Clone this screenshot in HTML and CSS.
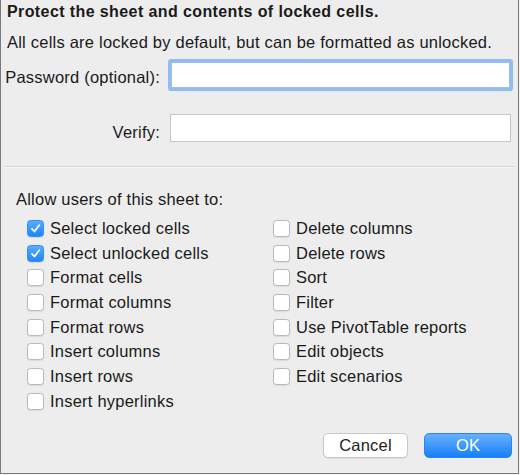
FILE: index.html
```html
<!DOCTYPE html>
<html>
<head>
<meta charset="utf-8">
<link rel="stylesheet" href="styles.css">
</head>
<body>
<div class="dialog">
  <div class="title">Protect the sheet and contents of locked cells.</div>
  <div class="desc">All cells are locked by default, but can be formatted as unlocked.</div>
  <div class="field-row pw-row">
    <label class="field-label">Password (optional):</label>
    <div class="input focused"></div>
  </div>
  <div class="field-row verify-row">
    <label class="field-label">Verify:</label>
    <div class="input"></div>
  </div>
  <div class="separator"></div>
  <div class="allow">Allow users of this sheet to:</div>
  <div class="options">
    <div class="col">
      <div class="opt"><span class="cb checked"><svg viewBox="0 0 16 16"><path d="M4.2 8.4 L6.9 11.2 L11.9 4.6" fill="none" stroke="#fff" stroke-width="1.9" stroke-linecap="round" stroke-linejoin="round"/></svg></span>Select locked cells</div>
      <div class="opt"><span class="cb checked"><svg viewBox="0 0 16 16"><path d="M4.2 8.4 L6.9 11.2 L11.9 4.6" fill="none" stroke="#fff" stroke-width="1.9" stroke-linecap="round" stroke-linejoin="round"/></svg></span>Select unlocked cells</div>
      <div class="opt"><span class="cb"></span>Format cells</div>
      <div class="opt"><span class="cb"></span>Format columns</div>
      <div class="opt"><span class="cb"></span>Format rows</div>
      <div class="opt"><span class="cb"></span>Insert columns</div>
      <div class="opt"><span class="cb"></span>Insert rows</div>
      <div class="opt"><span class="cb"></span>Insert hyperlinks</div>
    </div>
    <div class="col">
      <div class="opt"><span class="cb"></span>Delete columns</div>
      <div class="opt"><span class="cb"></span>Delete rows</div>
      <div class="opt"><span class="cb"></span>Sort</div>
      <div class="opt"><span class="cb"></span>Filter</div>
      <div class="opt"><span class="cb"></span>Use PivotTable reports</div>
      <div class="opt"><span class="cb"></span>Edit objects</div>
      <div class="opt"><span class="cb"></span>Edit scenarios</div>
    </div>
  </div>
  <div class="buttons">
    <button class="btn cancel">Cancel</button>
    <button class="btn ok">OK</button>
  </div>
</div>
</body>
</html>
```
FILE: styles.css
```css
html, body {
  margin: 0;
  padding: 0;
  background: #f4f4f4;
}
.dialog {
  width: 519px;
  height: 474px;
  box-sizing: border-box;
  background: #ededed;
  border-left: 1px solid #7a7a7a;
  border-right: 1px solid #7a7a7a;
  border-bottom: 1px solid #7a7a7a;
  font-family: "Liberation Sans", Arial, sans-serif;
  font-size: 16.5px;
  letter-spacing: 0.22px;
  color: #1a1a1a;
  display: flex;
  flex-direction: column;
}
.title {
  font-weight: bold;
  font-size: 16px;
  letter-spacing: 0.4px;
  line-height: 20px;
  padding: 2px 0 0 6px;
  height: 30px;
  box-sizing: border-box;
}
.desc {
  line-height: 20px;
  padding-left: 6px;
  margin-top: 2px;
}
.field-row {
  display: flex;
  align-items: flex-start;
}
.field-label {
  width: 159px;
  text-align: right;
  line-height: 20px;
  flex: none;
  white-space: nowrap;
}
.pw-row {
  margin-top: 10px;
}
.pw-row .field-label {
  padding-top: 5px;
}
.verify-row {
  margin-top: 26px;
}
.verify-row .field-label {
  padding-top: 8px;
}
.input {
  background: #fff;
  border: 1px solid #c6c6c6;
  box-sizing: border-box;
}
.pw-row .input {
  margin-left: 11px;
  width: 339px;
  height: 26px;
  border-color: #9ebfe9;
  box-shadow: 0 0 0 3px #8fbdf3;
  border-radius: 1px;
}
.verify-row .input {
  margin-left: 10px;
  width: 341px;
  height: 28px;
}
.separator {
  margin: 24px 4px 0 4px;
  height: 1px;
  background: #d4d4d4;
  border-bottom: 1px solid #f6f6f6;
}
.allow {
  margin-top: 21px;
  padding-left: 15px;
  line-height: 20px;
}
.options {
  display: flex;
  margin-top: 7px;
  padding-left: 26px;
}
.col {
  display: flex;
  flex-direction: column;
}
.col:first-child {
  width: 246px;
}
.opt {
  height: 24.7px;
  line-height: 24.7px;
  display: flex;
  align-items: center;
  white-space: nowrap;
}
.cb {
  width: 17px;
  height: 17px;
  box-sizing: border-box;
  border: 1px solid #b9b9b9;
  border-radius: 3.5px;
  background: #fff;
  margin-right: 6px;
  flex: none;
  box-shadow: 0 0.5px 1px rgba(0,0,0,0.08);
  display: flex;
  align-items: center;
  justify-content: center;
}
.cb.checked {
  border: 1px solid #2f8ffb;
  background: linear-gradient(#5aacfd, #1f86fb);
}
.cb svg {
  width: 15px;
  height: 15px;
}
.buttons {
  display: flex;
  justify-content: flex-end;
  gap: 16px;
  margin-top: auto;
  margin-bottom: 15px;
  padding-right: 6px;
}
.btn {
  font-family: "Liberation Sans", Arial, sans-serif;
  font-size: 16.5px;
  letter-spacing: 0.2px;
  height: 25px;
  border-radius: 5px;
  padding: 0;
  line-height: 23px;
  box-sizing: border-box;
}
.cancel {
  width: 85px;
  background: #fff;
  color: #222;
  border: 1px solid #c8c8c8;
  box-shadow: 0 1px 1px rgba(0,0,0,0.06);
}
.ok {
  width: 88px;
  color: #fff;
  border: 1px solid #2a84f6;
  background: linear-gradient(#68b0fb, #1680fa);
}
```
